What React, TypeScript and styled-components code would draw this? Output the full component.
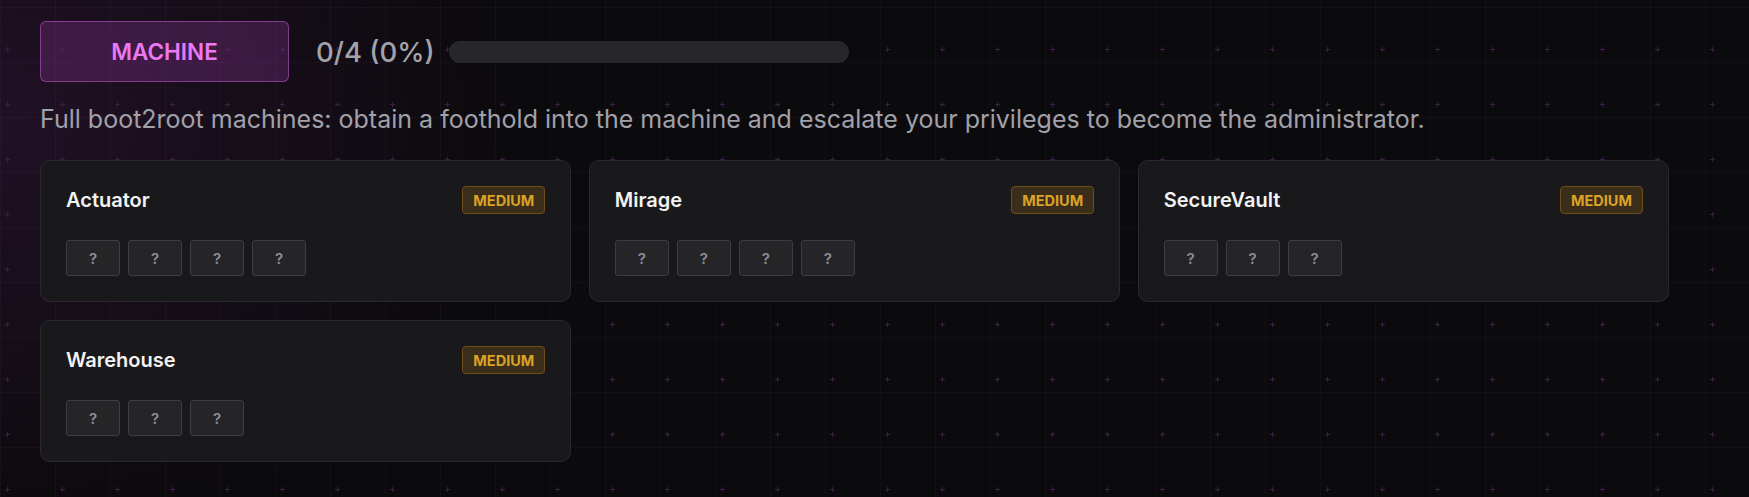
import styled, { createGlobalStyle } from "styled-components";

type Machine = {
  name: string;
  difficulty: string;
  flags: number;
};

const machines: Machine[] = [
  { name: "Actuator", difficulty: "MEDIUM", flags: 4 },
  { name: "Mirage", difficulty: "MEDIUM", flags: 4 },
  { name: "SecureVault", difficulty: "MEDIUM", flags: 3 },
  { name: "Warehouse", difficulty: "MEDIUM", flags: 3 },
];

const solved = 0;
const total = machines.length;

function App() {
  const pct = Math.round((solved / total) * 100);

  return (
    <>
      <GlobalStyle />
      <Page>
        <Header>
          <CategoryButton>MACHINE</CategoryButton>
          <Counter>
            {solved}/{total} ({pct}%)
          </Counter>
          <ProgressTrack>
            <ProgressFill style={{ width: `${pct}%` }} />
          </ProgressTrack>
        </Header>
        <Description>
          Full boot2root machines: obtain a foothold into the machine and
          escalate your privileges to become the administrator.
        </Description>
        <CardGrid>
          {machines.map((m) => (
            <Card key={m.name}>
              <CardHeader>
                <CardTitle>{m.name}</CardTitle>
                <Badge>{m.difficulty}</Badge>
              </CardHeader>
              <FlagRow>
                {Array.from({ length: m.flags }).map((_, i) => (
                  <FlagBox key={i}>?</FlagBox>
                ))}
              </FlagRow>
            </Card>
          ))}
        </CardGrid>
      </Page>
    </>
  );
}

export default App;

const GlobalStyle = createGlobalStyle`
  * {
    box-sizing: border-box;
  }
  html, body {
    margin: 0;
    padding: 0;
    background: #0b0a0c;
  }
  body {
    font-family: Inter, "Noto Sans", sans-serif;
  }
`;

const Page = styled.div`
  min-height: 497px;
  padding: 21px 40px 30px;
  background-color: #0b0a0c;
  background-image:
    radial-gradient(2.4px 0.6px at 7.7px 49.3px, #3a2040 100%, transparent 100%),
    radial-gradient(0.6px 2.4px at 7.7px 49.3px, #3a2040 100%, transparent 100%),
    linear-gradient(to right, rgba(120, 80, 140, 0.08) 1px, transparent 1px),
    linear-gradient(to bottom, rgba(120, 80, 140, 0.08) 1px, transparent 1px),
    radial-gradient(ellipse 700px 560px at 0px 120px, rgba(64, 26, 72, 0.42), transparent 75%);
  background-size: 55px 55px, 55px 55px, 55px 55px, 55px 55px, 100% 100%;
  background-position: 0 0, 0 0, 0 7px, 0 7px, 0 0;
  background-repeat: repeat, repeat, repeat, repeat, no-repeat;
`;

const Header = styled.div`
  display: flex;
  align-items: center;
`;

const CategoryButton = styled.button`
  width: 249px;
  height: 61px;
  border-radius: 6px;
  border: 1px solid rgba(200, 100, 210, 0.5);
  background: rgba(130, 50, 140, 0.35);
  color: #ec79f2;
  font-family: Inter, sans-serif;
  font-weight: 600;
  font-size: 22.5px;
  cursor: pointer;
`;

const Counter = styled.span`
  margin-left: 27px;
  font-size: 27.5px;
  font-weight: 500;
  color: #a3a3ab;
`;

const ProgressTrack = styled.div`
  margin-left: 14px;
  width: 400px;
  height: 22px;
  border-radius: 11px;
  background: #27272a;
  overflow: hidden;
`;

const ProgressFill = styled.div`
  height: 100%;
  background: #d946ef;
`;

const Description = styled.p`
  margin: 21px 0 24px;
  font-size: 25px;
  line-height: 33px;
  color: #a1a1aa;
`;

const CardGrid = styled.div`
  width: 1629px;
  display: grid;
  grid-template-columns: repeat(3, 1fr);
  gap: 18px 17.5px;
`;

const Card = styled.div`
  background: #19191b;
  border: 1px solid #2a2a2e;
  border-radius: 10px;
  padding: 25px;
`;

const CardHeader = styled.div`
  display: flex;
  justify-content: space-between;
  align-items: center;
  margin-bottom: 26px;
`;

const CardTitle = styled.h3`
  margin: 0;
  font-size: 20px;
  font-weight: 600;
  color: #f2f2f3;
`;

const Badge = styled.span`
  height: 28px;
  padding: 0 10px;
  display: inline-flex;
  align-items: center;
  border-radius: 4px;
  border: 1px solid #6a4e1c;
  background: #3a2e1b;
  color: #dca226;
  font-size: 14.5px;
  font-weight: 700;
`;

const FlagRow = styled.div`
  display: flex;
  gap: 8px;
`;

const FlagBox = styled.div`
  width: 54px;
  height: 36px;
  display: flex;
  align-items: center;
  justify-content: center;
  border: 1px solid #3d3d42;
  border-radius: 3px;
  background: #252528;
  color: #8e8e95;
  font-size: 15px;
  font-weight: 600;
`;
